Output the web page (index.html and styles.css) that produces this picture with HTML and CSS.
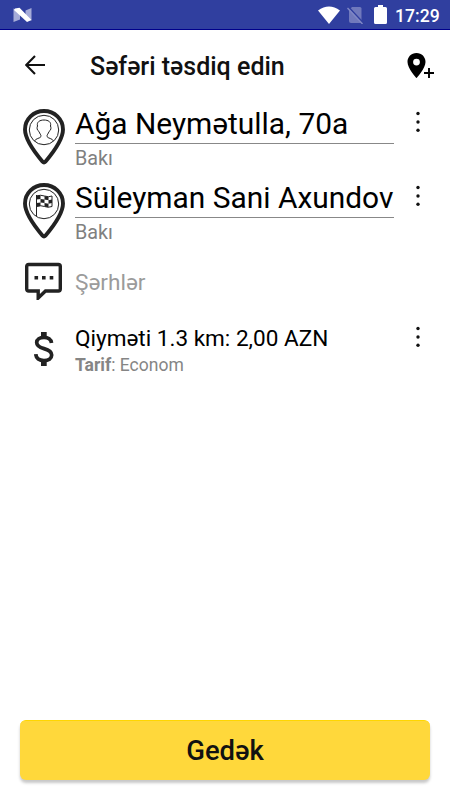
FILE: index.html
```html
<!DOCTYPE html>
<html lang="az">
<head>
<meta charset="utf-8">
<title>Səfəri təsdiq edin</title>
<link rel="stylesheet" href="styles.css">
</head>
<body>
<div class="statusbar">
  <svg class="logo" width="20" height="16" viewBox="0 0 20 16"><path d="M.5 1.500L7 4v8.500L.5 15zM12.500 3.500L18.500 1v12.500l-6-1z" fill="#a5abd8"/><path d="M2 1.500L6.500 .8 18.500 13l-4.500 2L1 3z" fill="#fff"/></svg>
  <div class="system">
    <svg width="22" height="18" viewBox="0 0 22 18"><path d="M0 4.500Q11-3.500 22 4.500L11 18z" fill="#fff"/></svg>
    <svg class="sim" width="17" height="18" viewBox="0 0 17 18"><path d="M5 1h8q1.500 0 1.500 1.500V15q0 2-1.500 2H4q-2 0-2-2V4z" fill="#7079bc"/><path d="M1.500 1l15 16.200" stroke="#303f9f" stroke-width="1.600"/><path d="M.5 2l15 16" stroke="#7f87c5" stroke-width="1.400"/></svg>
    <svg class="battery" width="13" height="19" viewBox="0 0 13 19"><path d="M4 0h5v2h2.500Q13 2 13 3.500v14q0 1.500-1.500 1.500h-10Q0 19 0 17.500v-14Q0 2 1.500 2H4z" fill="#fff"/></svg>
    <span class="time">17:29</span>
  </div>
</div>
<header class="toolbar">
  <svg class="back" width="20" height="20" viewBox="0 0 20 20"><path d="M20 10H1.500M10 1L1.200 10l8.800 9" fill="none" stroke="#111" stroke-width="2.100"/></svg>
  <h1>Səfəri təsdiq edin</h1>
  <svg class="add" width="28" height="26" viewBox="0 0 28 26"><path d="M9.500 0C4.300 0 .5 3.900.5 8.900.5 15.500 9.500 25 9.500 25s9-9.500 9-16.100C18.500 3.900 14.700 0 9.500 0zm0 5.700a3.400 3.400 0 1 1 0 6.800 3.400 3.400 0 0 1 0-6.800z" fill="#000" fill-rule="evenodd"/><path d="M17 20h10M22 15v10" stroke="#000" stroke-width="1.900"/></svg>
</header>
<main>
  <section class="address">
    <svg class="pin" width="42" height="56" viewBox="0 0 42 56"><path d="M21 2C10.500 2 2 10.300 2 20.500c0 10.300 9 22 17.600 32.200q1.400 1.500 2.800 0C31 42.500 40 30.800 40 20.500 40 10.300 31.500 2 21 2z" fill="#fff" stroke="#222" stroke-width="3.900"/><g fill="none" stroke="#222"><circle cx="21" cy="21" r="14.700"/><path d="M11.500 32c.8-2.600 5.900-2.600 6.500-4.500.3-1.800-1.400-2.700-2-5-2.300-1.400-2.200-3.800-1.500-5.500-1-4 2.200-6 6.500-6s7.500 2 6.500 6c.7 1.700.8 4.100-1.500 5.500-.6 2.300-2.300 3.200-2 5 .6 1.900 5.700 1.900 6.500 4.500"/></g></svg>
    <div class="text"><div class="street">Ağa Neymətulla, 70a</div><div class="city">Bakı</div></div>
    <svg class="more" width="6" height="22" viewBox="0 0 6 22"><g fill="#111"><circle cx="3" cy="2.500" r="1.700"/><circle cx="3" cy="11" r="1.700"/><circle cx="3" cy="19.300" r="1.700"/></g></svg>
  </section>
  <section class="address">
    <svg class="pin" width="42" height="56" viewBox="0 0 42 56"><path d="M21 2C10.500 2 2 10.300 2 20.500c0 10.300 9 22 17.600 32.200q1.400 1.500 2.800 0C31 42.500 40 30.800 40 20.500 40 10.300 31.500 2 21 2z" fill="#fff" stroke="#222" stroke-width="3.900"/><circle cx="21" cy="21" r="14.700" fill="none" stroke="#222"/><path d="M13.500 12v21M13.500 13q4-1.500 8 0t7.500 0v10.500q-4 1.500-7.500 0t-8 0" fill="none" stroke="#222"/><path d="M13.500 13q2-1 4-.5V16l-4 .5zM21.500 13q2 1 4 .8v3.500l-4-.8zM17.500 16l4 .5V20l-4-.5zM25.500 17.300l3.500-.8V20l-3.500.8zM13.500 20l4-.5V23l-4 .5zM21.500 20l4 .8v3.500l-4-.8z" fill="#222"/></svg>
    <div class="text"><div class="street">Süleyman Sani Axundov</div><div class="city">Bakı</div></div>
    <svg class="more" width="6" height="22" viewBox="0 0 6 22"><g fill="#111"><circle cx="3" cy="2.500" r="1.700"/><circle cx="3" cy="11" r="1.700"/><circle cx="3" cy="19.300" r="1.700"/></g></svg>
  </section>
  <section class="comments">
    <svg width="38" height="38" viewBox="0 0 38 38"><path d="M3.700 2.500h29.600q2 0 2 2V27q0 2-2 2H20.500l-7.300 7v-7H3.700q-2 0-2-2V4.500q0-2 2-2z" fill="#fff" stroke="#222" stroke-width="3.400"/><path d="M9.500 14h3.600v3.600H9.500zm7.500 0h3.600v3.600H17zm7.700 0h3.600v3.600h-3.600z" fill="#222"/></svg>
    <span>Şərhlər</span>
  </section>
  <section class="price">
    <svg class="dollar" width="20" height="34" viewBox="0 0 20 34"><path d="M17.500 11C17.200 7.200 14 5.300 10 5.300c-4.200 0-7.300 2-7.300 5.200 0 3.600 3 4.900 7.300 6.100 4.600 1.300 7.700 2.700 7.700 6.500 0 3.400-3.300 5.500-7.700 5.500-4.700 0-8-2.300-8.200-6.400" fill="none" stroke="#222" stroke-width="3.700"/><path d="M7 0h5.700v5.500H7zm0 28.500h5.700V34H7z" fill="#222"/></svg>
    <div class="text"><div class="amount">Qiyməti 1.3 km: 2,00 AZN</div><div class="tariff"><b>Tarif</b>: Econom</div></div>
    <svg class="more" width="6" height="22" viewBox="0 0 6 22"><g fill="#111"><circle cx="3" cy="2.500" r="1.700"/><circle cx="3" cy="11" r="1.700"/><circle cx="3" cy="19.300" r="1.700"/></g></svg>
  </section>
</main>
<button class="go">Gedək</button>
</body>
</html>
```
FILE: styles.css
```css
* { box-sizing: border-box; }
body { margin: 0; height: 800px; display: flex; flex-direction: column; background: #fff; color: #000; font-family: Roboto, "Noto Sans", sans-serif; overflow: hidden; }
svg { display: block; flex: none; }
.statusbar { height: 30px; flex: none; display: flex; justify-content: space-between; background: #303f9f; border-bottom: 1px solid #00008b; padding: 0 10px 0 13px; }
.logo { margin-top: 7px; }
.system { display: flex; align-items: flex-start; padding-top: 6px; }
.sim { margin-left: 7px; }
.battery { margin-left: 10px; margin-top: -1px; }
.time { color: #fff; font-size: 17.6px; font-weight: 500; line-height: 20px; margin-left: 8px; width: 45px; white-space: nowrap; }
.toolbar { height: 76px; flex: none; display: flex; align-items: flex-start; padding: 22px 15px 0 25px; }
.back { margin-top: 3px; }
h1 { margin: 0 0 0 45px; font-size: 25px; line-height: 30px; font-weight: 500; color: #111; flex: 1; white-space: nowrap; }
.add { margin-top: 1px; }
main { flex: 1; }
.address { display: flex; height: 74px; padding: 0 29px 0 23px; }
.pin { margin-top: 3px; }
.text { width: 319px; margin-left: 10px; flex: none; }
.address .more { margin-left: auto; margin-top: 5px; }
.street { height: 38px; border-bottom: 1px solid #888; font-size: 29.9px; line-height: 36px; white-space: nowrap; overflow: hidden; }
.city { font-size: 19.8px; line-height: 24px; margin-top: 3px; color: #808080; }
.comments { height: 72px; display: flex; padding: 8px 0 0 25px; }
.comments span { margin-left: 12px; margin-top: 7px; font-size: 22.6px; line-height: 28px; color: #9b9b9b; }
.price { display: flex; padding: 0 29px 0 34px; }
.dollar { margin-top: 6px; }
.price .text { margin-left: 21px; width: 319px; }
.amount { font-size: 22.55px; line-height: 28px; margin-top: -1px; }
.tariff { font-size: 17.5px; line-height: 22px; margin-top: 1px; color: #858585; }
.price .more { margin-left: auto; margin-top: 0; }
.go { flex: none; height: 60px; margin: 0 20px 20px; border: 0; border-top: 1px solid #ffd600; border-radius: 6px; background: #ffd83b; box-shadow: 0 3px 3px rgba(0,0,0,.22); color: #111; font: 500 27.4px/60px Roboto, sans-serif; padding: 0; }
```
